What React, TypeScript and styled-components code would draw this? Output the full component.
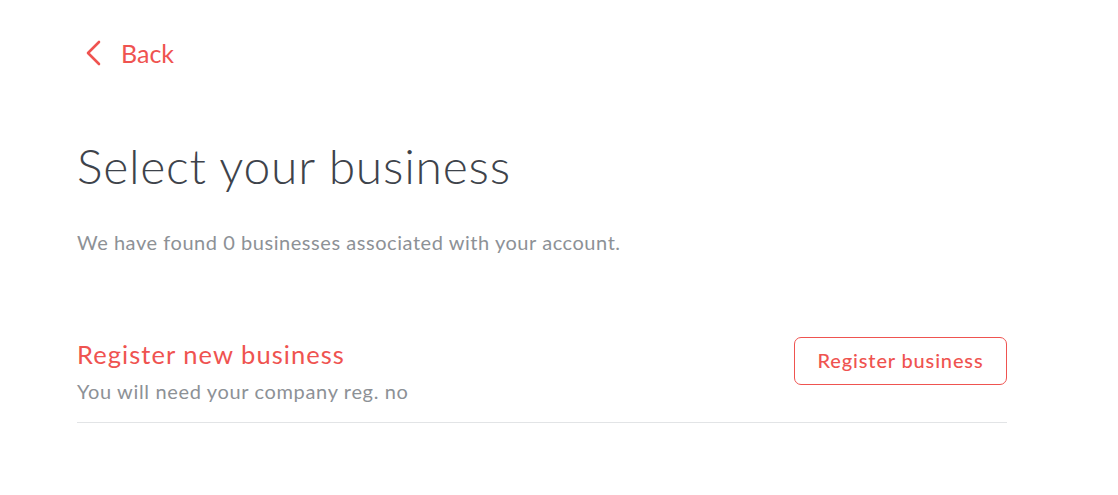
import React from "react";
import styled, { createGlobalStyle } from "styled-components";

const Global = createGlobalStyle`
  html, body { margin: 0; padding: 0; background: #ffffff; }
  body { font-family: "Lato", "Noto Sans", sans-serif; }
`;

const Page = styled.div`
  padding: 36px 111px 0 77px;
  display: flex;
  flex-direction: column;
`;

const BackLink = styled.a`
  display: flex;
  align-items: center;
  gap: 19px;
  color: #ef5350;
  font-size: 25px;
  text-decoration: none;
  margin-left: 8px;
  height: 34px;
  cursor: pointer;
`;

const Title = styled.h1`
  margin: 67px 0 0 0;
  font-size: 48px;
  font-weight: 300;
  color: #3e434b;
  line-height: 58px;
  letter-spacing: 0.75px;
`;

const Subtitle = styled.p`
  margin: 33px 0 0 0;
  font-size: 20px;
  color: #8d9196;
  font-weight: 400;
  line-height: 28px;
  letter-spacing: 0.55px;
`;

const Row = styled.div`
  margin-top: 82px;
  display: flex;
  justify-content: space-between;
  align-items: flex-start;
  padding-bottom: 17px;
  border-bottom: 1px solid #e2e4e6;
`;

const Info = styled.div`
  display: flex;
  flex-direction: column;
  gap: 7px;
`;

const RowTitle = styled.div`
  font-size: 25.5px;
  color: #ef5350;
  line-height: 32px;
  letter-spacing: 1.05px;
`;

const RowText = styled.div`
  font-size: 20px;
  color: #8d9196;
  line-height: 28px;
  letter-spacing: 0.65px;
`;

const OutlineButton = styled.button`
  margin-top: -1px;
  width: 213px;
  height: 48px;
  padding: 0 0 3px 0;
  border: 1px solid #ef5350;
  border-radius: 7px;
  background: #fff;
  color: #ef5350;
  font-family: inherit;
  font-size: 20px;
  font-weight: 500;
  letter-spacing: 0.85px;
  cursor: pointer;
`;

export default function App() {
  return (
    <>
      <Global />
      <Page>
        <BackLink>
          <svg width="17" height="26" viewBox="0 0 17 26" fill="none">
            <path d="M14 2 L3 13 L14 24" stroke="#ef5350" strokeWidth="2.6" strokeLinecap="round" strokeLinejoin="round" />
          </svg>
          Back
        </BackLink>
        <Title>Select your business</Title>
        <Subtitle>We have found 0 businesses associated with your account.</Subtitle>
        <Row>
          <Info>
            <RowTitle>Register new business</RowTitle>
            <RowText>You will need your company reg. no</RowText>
          </Info>
          <OutlineButton>Register business</OutlineButton>
        </Row>
      </Page>
    </>
  );
}
